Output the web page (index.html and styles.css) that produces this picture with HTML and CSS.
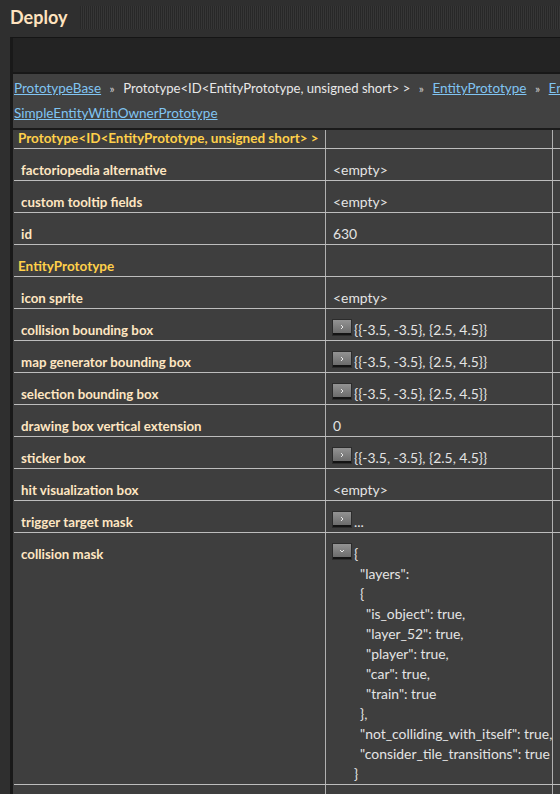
FILE: index.html
```html
<!DOCTYPE html>
<html>
<head>
<meta charset="utf-8">
<link rel="stylesheet" href="styles.css">
</head>
<body>
<div class="titlebar">
  <h1 class="title">Deploy</h1>
  <div class="hatch"></div>
</div>
<div class="panel">
  <div class="toolbar"></div>
  <div class="crumbs">
    <div class="crumb-line"><a class="link" href="#">PrototypeBase</a><span class="sep">»</span><span class="plain">Prototype&lt;ID&lt;EntityPrototype, unsigned short&gt; &gt;</span><span class="sep">»</span><a class="link" href="#">EntityPrototype</a><span class="sep">»</span><a class="link" href="#">EntityWithHealthPrototype</a></div>
    <div class="crumb-line"><a class="link" href="#">SimpleEntityWithOwnerPrototype</a></div>
  </div>
  <div class="divider"></div>
  <div class="scroll">
    <div class="grid">
      <div class="row head"><div class="c1">Prototype&lt;ID&lt;EntityPrototype, unsigned short&gt; &gt;</div><div class="c2"></div><div class="c3"></div></div>
      <div class="row"><div class="c1">factoriopedia alternative</div><div class="c2">&lt;empty&gt;</div><div class="c3"></div></div>
      <div class="row"><div class="c1">custom tooltip fields</div><div class="c2">&lt;empty&gt;</div><div class="c3"></div></div>
      <div class="row"><div class="c1">id</div><div class="c2">630</div><div class="c3"></div></div>
      <div class="row head"><div class="c1">EntityPrototype</div><div class="c2"></div><div class="c3"></div></div>
      <div class="row"><div class="c1">icon sprite</div><div class="c2">&lt;empty&gt;</div><div class="c3"></div></div>
      <div class="row"><div class="c1">collision bounding box</div><div class="c2 val"><span class="btn"><svg class="chev" width="4" height="6" viewBox="0 0 4 6"><path d="M1 1 L3 3 L1 5" fill="none" stroke="#e8e8e8" stroke-width="1"/></svg></span><span>{{-3.5, -3.5}, {2.5, 4.5}}</span></div><div class="c3"></div></div>
      <div class="row"><div class="c1">map generator bounding box</div><div class="c2 val"><span class="btn"><svg class="chev" width="4" height="6" viewBox="0 0 4 6"><path d="M1 1 L3 3 L1 5" fill="none" stroke="#e8e8e8" stroke-width="1"/></svg></span><span>{{-3.5, -3.5}, {2.5, 4.5}}</span></div><div class="c3"></div></div>
      <div class="row"><div class="c1">selection bounding box</div><div class="c2 val"><span class="btn"><svg class="chev" width="4" height="6" viewBox="0 0 4 6"><path d="M1 1 L3 3 L1 5" fill="none" stroke="#e8e8e8" stroke-width="1"/></svg></span><span>{{-3.5, -3.5}, {2.5, 4.5}}</span></div><div class="c3"></div></div>
      <div class="row"><div class="c1">drawing box vertical extension</div><div class="c2">0</div><div class="c3"></div></div>
      <div class="row"><div class="c1">sticker box</div><div class="c2 val"><span class="btn"><svg class="chev" width="4" height="6" viewBox="0 0 4 6"><path d="M1 1 L3 3 L1 5" fill="none" stroke="#e8e8e8" stroke-width="1"/></svg></span><span>{{-3.5, -3.5}, {2.5, 4.5}}</span></div><div class="c3"></div></div>
      <div class="row"><div class="c1">hit visualization box</div><div class="c2">&lt;empty&gt;</div><div class="c3"></div></div>
      <div class="row"><div class="c1">trigger target mask</div><div class="c2 val"><span class="btn"><svg class="chev" width="4" height="6" viewBox="0 0 4 6"><path d="M1 1 L3 3 L1 5" fill="none" stroke="#e8e8e8" stroke-width="1"/></svg></span><span>...</span></div><div class="c3"></div></div>
      <div class="row"><div class="c1">collision mask</div><div class="c2 val"><span class="btn"><svg class="chev" width="6" height="4" viewBox="0 0 6 4"><path d="M1 1 L3 3 L5 1" fill="none" stroke="#e8e8e8" stroke-width="1"/></svg></span>
        <div class="json">
          <div>{</div>
          <div class="l1">"layers":</div>
          <div class="l1">{</div>
          <div class="l2">"is_object": true,</div>
          <div class="l2">"layer_52": true,</div>
          <div class="l2">"player": true,</div>
          <div class="l2">"car": true,</div>
          <div class="l2">"train": true</div>
          <div class="l1">},</div>
          <div class="l1">"not_colliding_with_itself": true,</div>
          <div class="l1">"consider_tile_transitions": true</div>
          <div>}</div>
        </div></div><div class="c3"></div></div>
      <div class="row"><div class="c1">&nbsp;</div><div class="c2"></div><div class="c3"></div></div>
    </div>
  </div>
</div>
</body>
</html>
```
FILE: styles.css
```css
html, body {
  margin: 0;
  padding: 0;
}
body {
  width: 560px;
  height: 794px;
  overflow: hidden;
  background: #2f2f2f;
  font-family: Lato, "Open Sans", sans-serif;
  font-size: 13px;
  color: #e6e6e6;
}
.titlebar {
  height: 37px;
  display: flex;
  align-items: flex-start;
  padding-left: 10px;
}
.title {
  margin: 6px 0 0;
  font-size: 18px;
  font-weight: 700;
  color: #ffe3bf;
  line-height: 22px;
}
.hatch {
  flex: 1;
  height: 23px;
  margin-left: 13px;
  margin-top: 6px;
  background: repeating-linear-gradient(90deg, #282828 0, #282828 1px, #363636 1px, #363636 2px);
}
.panel {
  margin-left: 10px;
  width: 900px;
  border-left: 3px solid #191919;
  border-top: 1px solid #151515;
  background: #3e3e3e;
}
.toolbar {
  height: 34px;
  background: #232323;
  border-bottom: 2px solid #181818;
}
.crumbs {
  background: #414141;
  padding: 2px 0 3px 1px;
  font-size: 13.5px;
}
.crumb-line {
  white-space: nowrap;
  line-height: 24px;
}
.link {
  color: #80c4f2;
  text-decoration: underline;
}
.plain {
  color: #e8e8e8;
  font-size: 13.1px;
}
.sep {
  color: #d0d0d0;
  margin: 0 8.5px;
  font-size: 12px;
}
.divider {
  height: 2px;
  background: #1a1a1a;
}
.scroll {
  overflow: hidden;
  height: 700px;
  padding-left: 1px;
}
.grid {
  margin-top: -13px;
}
.row {
  display: grid;
  grid-template-columns: 311px 227px 300px;
  border-bottom: 1px solid #bdbdbd;
}
.c1, .c2, .c3 {
  padding-top: 11px;
  line-height: 20px;
  min-height: 20px;
}
.c1 {
  padding-left: 7px;
  color: #ffe6c2;
  font-weight: 700;
  font-size: 13.3px;
}
.c2 {
  padding-left: 7px;
  border-left: 1px solid #b0b0b0;
  color: #e4e4e4;
  font-size: 13.9px;
}
.c3 {
  border-left: 1px solid #b0b0b0;
}
.head .c1 {
  padding-left: 4px;
  color: #ffd04a;
  font-size: 13.5px;
}
.val {
  display: flex;
  align-items: flex-start;
  gap: 3px;
}
.btn {
  flex: none;
  width: 18px;
  height: 13px;
  background: linear-gradient(#939393, #6c6c6c);
  border-bottom: 2px solid #141414;
  box-shadow: 0 0 0 1px #2c2c2c;
  display: flex;
  align-items: center;
  justify-content: center;
}
.chev {
  display: block;
}
.json {
  white-space: nowrap;
}
.l1 {
  padding-left: 6px;
}
.l2 {
  padding-left: 12px;
}
```
